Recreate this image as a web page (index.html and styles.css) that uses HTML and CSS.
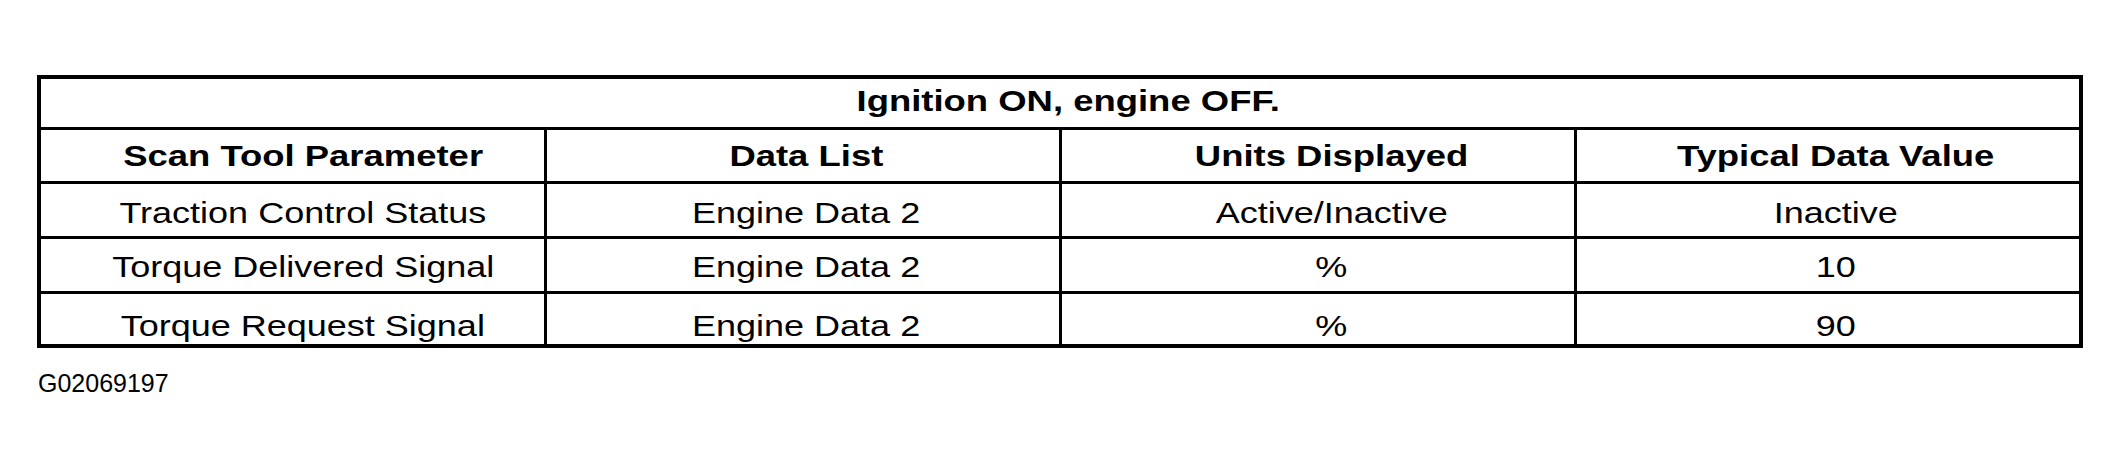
FILE: index.html
```html
<!DOCTYPE html>
<html lang="en">
<head>
<meta charset="utf-8">
<title>Scan Tool Data</title>
<link rel="stylesheet" href="styles.css">
</head>
<body>
<div class="page">
  <table class="data">
    <colgroup>
      <col class="c1"><col class="c2"><col class="c3"><col class="c4">
    </colgroup>
    <tr class="title-row">
      <th colspan="4"><span class="t">Ignition ON, engine OFF.</span></th>
    </tr>
    <tr class="head-row">
      <th class="k1"><span class="t">Scan Tool Parameter</span></th>
      <th class="k2"><span class="t">Data List</span></th>
      <th class="k3"><span class="t">Units Displayed</span></th>
      <th class="k4"><span class="t">Typical Data Value</span></th>
    </tr>
    <tr class="row r1">
      <td class="k1"><span class="t">Traction Control Status</span></td>
      <td class="k2"><span class="t">Engine Data 2</span></td>
      <td class="k3"><span class="t">Active/Inactive</span></td>
      <td class="k4"><span class="t">Inactive</span></td>
    </tr>
    <tr class="row r2">
      <td class="k1"><span class="t">Torque Delivered Signal</span></td>
      <td class="k2"><span class="t">Engine Data 2</span></td>
      <td class="k3"><span class="t">%</span></td>
      <td class="k4"><span class="t">10</span></td>
    </tr>
    <tr class="row r3">
      <td class="k1"><span class="t">Torque Request Signal</span></td>
      <td class="k2"><span class="t">Engine Data 2</span></td>
      <td class="k3"><span class="t">%</span></td>
      <td class="k4"><span class="t">90</span></td>
    </tr>
  </table>
  <div class="code">G02069197</div>
</div>
</body>
</html>
```

FILE: styles.css
```css
html, body {
  margin: 0;
  padding: 0;
  background: #fff;
}

.page {
  padding: 75px 0 0 37px;
  font-family: "Liberation Sans", Arial, sans-serif;
  color: #000;
}

.data {
  border-collapse: collapse;
  table-layout: fixed;
  width: 2046px;
  border: 4px solid #000;
}

.c1 { width: 506px; }
.c2 { width: 515px; }
.c3 { width: 515px; }
.c4 { width: 506px; }

.data th,
.data td {
  border: 3px solid #000;
  padding: 0;
  text-align: center;
  vertical-align: middle;
  font-size: 30px;
  line-height: 30px;
  white-space: nowrap;
}

.data th {
  font-weight: bold;
}

.data td {
  font-weight: normal;
}

.t {
  display: inline-block;
  transform: scaleX(1.2);
}

.data th .t {
  transform: scaleX(1.215);
}

.data .k1 { padding-left: 22px; }
.data .k2 { padding-left: 8px; }
.data .k3 { padding-left: 28px; }
.data .k4 { padding-left: 16px; }

.title-row th {
  height: 41px;
  vertical-align: top;
  padding-top: 7px;
  padding-left: 16px;
}

.head-row th {
  height: 51px;
}

.r1 td {
  height: 47px;
  padding-top: 5px;
}

.r2 td {
  height: 49px;
  padding-top: 3px;
}

.r3 td {
  height: 36px;
  padding-top: 14px;
}

.code {
  margin-top: 20px;
  margin-left: 1px;
  font-size: 25px;
  line-height: 30px;
}
```
